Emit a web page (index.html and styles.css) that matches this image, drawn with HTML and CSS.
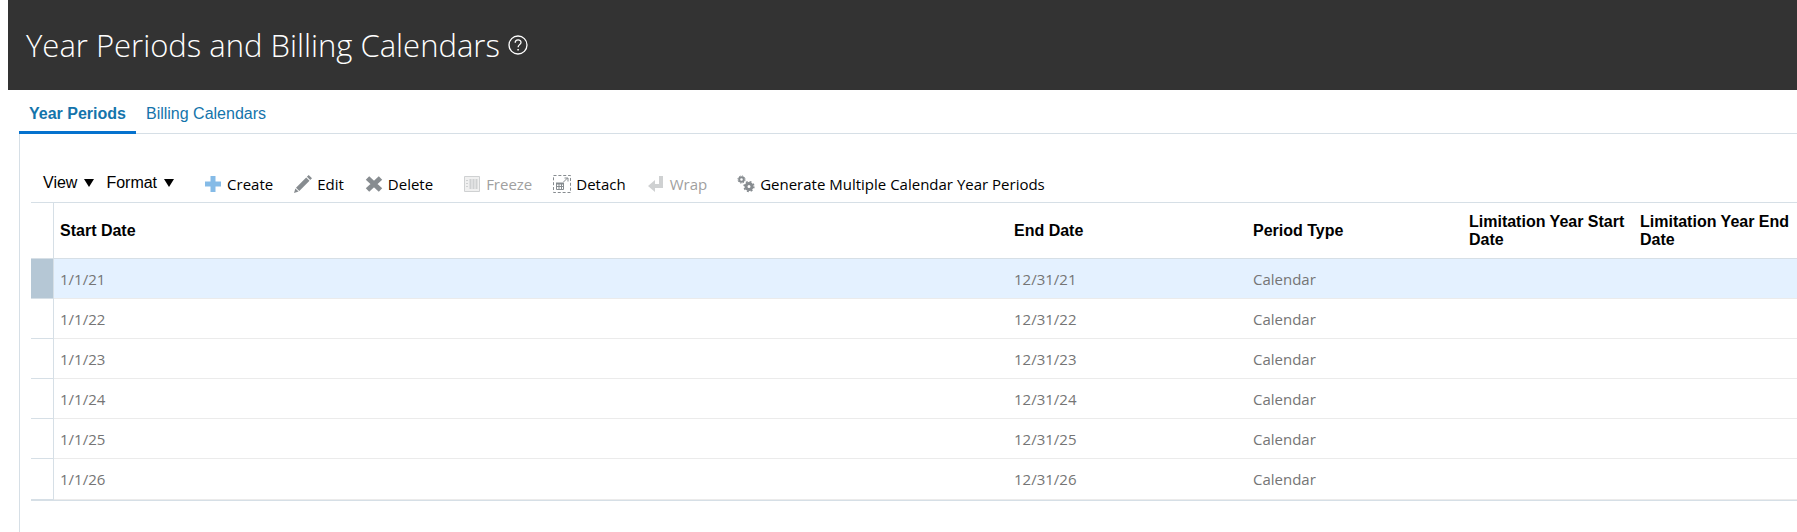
FILE: index.html
```html
<!DOCTYPE html>
<html lang="en">
<head>
  <meta charset="UTF-8">
  <title>Year Periods and Billing Calendars</title>
  <link rel="stylesheet" href="styles.css">
</head>
<body>

<header class="page-header">
  <h1>Year Periods and Billing Calendars</h1>
  <button class="help" type="button" aria-label="Help">
    <svg width="20" height="20" viewBox="0 0 20 20" fill="none" stroke="#fff">
      <circle cx="10" cy="10" r="9" stroke-width="1.3"/>
      <path d="M7.2 7.8c0-3.9 5.8-3.8 5.8-.4 0 2.2-2.9 2.3-2.9 4.9" stroke-width="1.3"/>
      <path d="M10.1 14v1.6" stroke-width="1.5"/>
    </svg>
  </button>
</header>

<main class="content">
  <nav class="tabs">
    <a class="tab active" href="#periods">Year Periods</a>
    <a class="tab" href="#calendars">Billing Calendars</a>
  </nav>

  <section class="panel" id="periods">
    <div class="toolbar">
      <div class="menus">
        <button class="menu" type="button">View
          <svg width="10" height="8" viewBox="0 0 10 8"><path d="M0 0h10L5 8z"/></svg>
        </button>
        <button class="menu" type="button">Format
          <svg width="10" height="8" viewBox="0 0 10 8"><path d="M0 0h10L5 8z"/></svg>
        </button>
      </div>
      <div class="tools">
        <button class="tool" type="button">
          <svg width="18" height="18" viewBox="0 0 18 18"><path d="M6.5 1h5v5.5H17v5h-5.5V17h-5v-5.5H1v-5h5.5z" fill="#85bbe7"/></svg>
          Create
        </button>
        <button class="tool" type="button">
          <svg width="18" height="18" viewBox="0 0 18 18" fill="#878c90"><path d="M14.7 0 18 3.3 16.2 5.1 12.9 1.8zM12.2 2.5 15.5 5.8 5.3 16 2 12.7zM1.400 13.400 4.600 16.600 0 18z"/></svg>
          Edit
        </button>
        <button class="tool" type="button">
          <svg width="18" height="18" viewBox="0 0 18 18"><path d="M2.500 3l13 12M15.500 3l-13 12" stroke="#878c90" stroke-width="5"/></svg>
          Delete
        </button>
      </div>
      <div class="tools">
        <button class="tool" type="button" disabled>
          <svg width="18" height="18" viewBox="0 0 18 18" fill="none" stroke="#cfd1d2"><path d="M1.5 1.5h15v15h-15z" fill="#f0f0f0"/><path d="M3 5.500h2M3 8.500h2M3 11.500h2"/><path d="M7.500 4v10M10.500 4v10M13.500 4v10" stroke-width="2"/></svg>
          Freeze
        </button>
        <button class="tool" type="button">
          <svg width="18" height="18" viewBox="0 0 18 18" fill="none" stroke="#878c90"><path d="M.5.5h17v17H.5z" stroke-dasharray="3 1.860"/><path d="M3.500 8.500h7v6h-7zM3.500 11.500h7M6 8.500v6M8.500 8.500v6"/><path d="M3 8.500h8" stroke-width="2"/><path d="M10.500 7l4-4M11.500 3h3.500v3.500"/></svg>
          Detach
        </button>
        <button class="tool" type="button" disabled>
          <svg width="18" height="18" viewBox="0 0 18 18" fill="#cfd1d2"><path d="M12 1h4v12H8v4L1 11l7-6v4h4z"/></svg>
          Wrap
        </button>
      </div>
      <div class="tools">
        <button class="tool" type="button">
          <svg width="18" height="18" viewBox="0 0 18 18" fill="none" stroke="#878c90"><circle cx="4.5" cy="4.5" r="2.3" stroke-width="2"/><circle cx="4.5" cy="4.5" r="3.6" stroke-dasharray="1.4 1.43"/><circle cx="12" cy="11.500" r="3" stroke-width="3"/><circle cx="12" cy="11.500" r="4.900" stroke-width="1.500" stroke-dasharray="1.900 1.950"/></svg>
          Generate Multiple Calendar Year Periods
        </button>
      </div>
    </div>

    <table class="periods">
      <colgroup>
        <col class="col-select">
        <col>
        <col class="col-end">
        <col class="col-type">
        <col class="col-limit-start">
        <col class="col-limit-end">
      </colgroup>
      <thead>
        <tr>
          <td></td>
          <th scope="col">Start Date</th>
          <th scope="col">End Date</th>
          <th scope="col">Period Type</th>
          <th scope="col">Limitation Year Start Date</th>
          <th scope="col">Limitation Year End Date</th>
        </tr>
      </thead>
      <tbody>
        <tr class="selected"><td></td><td>1/1/21</td><td>12/31/21</td><td>Calendar</td><td></td><td></td></tr>
        <tr><td></td><td>1/1/22</td><td>12/31/22</td><td>Calendar</td><td></td><td></td></tr>
        <tr><td></td><td>1/1/23</td><td>12/31/23</td><td>Calendar</td><td></td><td></td></tr>
        <tr><td></td><td>1/1/24</td><td>12/31/24</td><td>Calendar</td><td></td><td></td></tr>
        <tr><td></td><td>1/1/25</td><td>12/31/25</td><td>Calendar</td><td></td><td></td></tr>
        <tr><td></td><td>1/1/26</td><td>12/31/26</td><td>Calendar</td><td></td><td></td></tr>
      </tbody>
    </table>
  </section>
</main>

</body>
</html>
```

FILE: styles.css
```css
* {
  box-sizing: border-box;
}

body {
  margin: 0;
  padding-left: 8px;
  min-height: 100vh;
  display: flex;
  flex-direction: column;
  background: #fff;
  font-family: "Liberation Sans", Arial, sans-serif;
  font-size: 16px;
  color: #000;
}

button {
  padding: 0;
  border: none;
  background: none;
  color: inherit;
  cursor: pointer;
}

.page-header {
  display: flex;
  align-items: center;
  gap: 8px;
  height: 90px;
  padding-left: 18px;
  background: #333;
  color: #fff;
}

.page-header h1 {
  margin: 0;
  font-family: "Open Sans", "Noto Sans", sans-serif;
  font-size: 31px;
  font-weight: 300;
  line-height: 44px;
}

.help svg {
  display: block;
}

.content {
  flex: 1;
  display: flex;
  flex-direction: column;
  padding-left: 11px;
}

.tabs {
  display: flex;
  height: 44px;
  border-bottom: 1px solid #d6dfe6;
}

.tab {
  height: 44px;
  padding: 0 10px;
  line-height: 48px;
  color: #1474ab;
  text-decoration: none;
}

.tab.active {
  border-bottom: 3px solid #0572ce;
  font-weight: bold;
}

.panel {
  flex: 1;
  padding: 34px 0 0 11px;
  border-left: 1px solid #d6dfe6;
}

.toolbar {
  display: flex;
  align-items: center;
  gap: 30px;
  height: 34px;
  padding: 0 0 2px 12px;
}

.menus {
  display: flex;
  gap: 12px;
  padding-bottom: 2px;
}

.menu {
  display: flex;
  align-items: center;
  gap: 7px;
  font: 16px/20px "Liberation Sans", Arial, sans-serif;
}

.tools {
  display: flex;
  gap: 21px;
}

.tool {
  display: flex;
  align-items: center;
  gap: 5px;
  font: 15px/20px "Open Sans", "Noto Sans", sans-serif;
}

.tool:disabled {
  color: #a0a0a0;
  cursor: default;
}

.periods {
  width: 100%;
  table-layout: fixed;
  border-collapse: separate;
  border-spacing: 0;
  border-top: 1px solid #d6dfe6;
  border-bottom: 1px solid #d6dfe6;
}

.col-select {
  width: 23px;
}

.col-end {
  width: 239px;
}

.col-type {
  width: 216px;
}

.col-limit-start {
  width: 171px;
}

.col-limit-end {
  width: 163px;
}

.periods th,
.periods td {
  padding: 0 6px;
  text-align: left;
}

.periods th {
  height: 56px;
  padding-right: 0;
  border-bottom: 1px solid #d6dfe6;
  line-height: 18px;
}

.periods td {
  height: 40px;
  border-bottom: 1px solid #ebebeb;
  font-family: "Open Sans", "Noto Sans", sans-serif;
  font-size: 15px;
  line-height: 20px;
  color: #757575;
}

.periods tr:last-child td {
  height: 41px;
}

.periods td:first-child {
  border-right: 1px solid #d6dfe6;
  border-bottom-color: #d6dfe6;
}

.periods .selected td {
  background: #e4f1ff;
}

.periods .selected td:first-child {
  background: #b5c7d5;
}
```
